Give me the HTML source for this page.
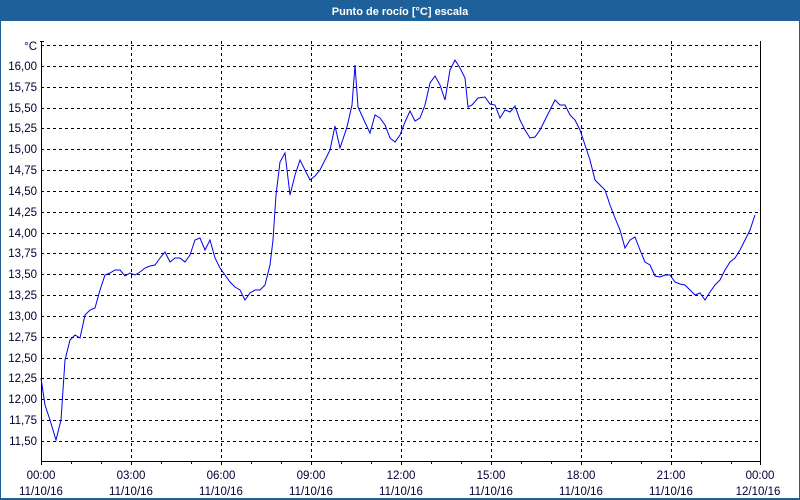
<!DOCTYPE html>
<html><head><meta charset="utf-8"><style>
body{margin:0;width:800px;height:500px;overflow:hidden;background:#fff;font-family:"Liberation Sans",sans-serif}
</style></head><body>
<svg width="800" height="500" xmlns="http://www.w3.org/2000/svg" style="position:absolute;left:0;top:0" font-family="'Liberation Sans',sans-serif">
<rect x="0" y="0" width="800" height="500" fill="#1e6099"/>
<rect x="1" y="21" width="798" height="477" fill="#fff"/>
<text x="400" y="15" fill="#fff" font-size="11" font-weight="bold" text-anchor="middle">Punto de rocío [°C] escala</text>
<g stroke="#000" stroke-dasharray="3,3" stroke-width="1">
<line x1="41" y1="45.5" x2="760" y2="45.5"/>
<line x1="41" y1="66.5" x2="760" y2="66.5"/><line x1="41" y1="87.5" x2="760" y2="87.5"/><line x1="41" y1="108.5" x2="760" y2="108.5"/><line x1="41" y1="128.5" x2="760" y2="128.5"/><line x1="41" y1="149.5" x2="760" y2="149.5"/><line x1="41" y1="170.5" x2="760" y2="170.5"/><line x1="41" y1="191.5" x2="760" y2="191.5"/><line x1="41" y1="212.5" x2="760" y2="212.5"/><line x1="41" y1="233.5" x2="760" y2="233.5"/><line x1="41" y1="253.5" x2="760" y2="253.5"/><line x1="41" y1="274.5" x2="760" y2="274.5"/><line x1="41" y1="295.5" x2="760" y2="295.5"/><line x1="41" y1="316.5" x2="760" y2="316.5"/><line x1="41" y1="337.5" x2="760" y2="337.5"/><line x1="41" y1="358.5" x2="760" y2="358.5"/><line x1="41" y1="378.5" x2="760" y2="378.5"/><line x1="41" y1="399.5" x2="760" y2="399.5"/><line x1="41" y1="420.5" x2="760" y2="420.5"/><line x1="41" y1="441.5" x2="760" y2="441.5"/>
<line x1="131.5" y1="41" x2="131.5" y2="461"/><line x1="221.5" y1="41" x2="221.5" y2="461"/><line x1="311.5" y1="41" x2="311.5" y2="461"/><line x1="401.5" y1="41" x2="401.5" y2="461"/><line x1="491.5" y1="41" x2="491.5" y2="461"/><line x1="581.5" y1="41" x2="581.5" y2="461"/><line x1="671.5" y1="41" x2="671.5" y2="461"/>
</g>
<g stroke="#000" stroke-width="1" fill="none">
<polyline points="41.5,41 41.5,461.5 760.5,461.5 760.5,41"/>
<line x1="40" y1="41.5" x2="44" y2="41.5"/>
</g>
<g stroke="#000" stroke-width="1">
<path d="M41.5 461v4M71.5 461v3M101.5 461v3M131.5 461v4M161.5 461v3M191.5 461v3M221.5 461v4M251.5 461v3M281.5 461v3M311.5 461v4M341.5 461v3M371.5 461v3M401.5 461v4M431.5 461v3M461.5 461v3M491.5 461v4M521.5 461v3M551.5 461v3M581.5 461v4M611.5 461v3M641.5 461v3M671.5 461v4M701.5 461v3M731.5 461v3M760.5 461v4"/>
</g>
<g fill="#000033" font-size="11.5" text-anchor="end">
<text x="37" y="50">°C</text>
<text x="37" y="70">16,00</text><text x="37" y="91">15,75</text><text x="37" y="112">15,50</text><text x="37" y="132">15,25</text><text x="37" y="153">15,00</text><text x="37" y="174">14,75</text><text x="37" y="195">14,50</text><text x="37" y="216">14,25</text><text x="37" y="237">14,00</text><text x="37" y="257">13,75</text><text x="37" y="278">13,50</text><text x="37" y="299">13,25</text><text x="37" y="320">13,00</text><text x="37" y="341">12,75</text><text x="37" y="362">12,50</text><text x="37" y="382">12,25</text><text x="37" y="403">12,00</text><text x="37" y="424">11,75</text><text x="37" y="445">11,50</text>
</g>
<g fill="#000033" font-size="11.5" text-anchor="middle">
<text x="41" y="479">00:00</text><text x="41" y="495">11/10/16</text>
<text x="131" y="479">03:00</text><text x="131" y="495">11/10/16</text>
<text x="221" y="479">06:00</text><text x="221" y="495">11/10/16</text>
<text x="311" y="479">09:00</text><text x="311" y="495">11/10/16</text>
<text x="401" y="479">12:00</text><text x="401" y="495">11/10/16</text>
<text x="491" y="479">15:00</text><text x="491" y="495">11/10/16</text>
<text x="581" y="479">18:00</text><text x="581" y="495">11/10/16</text>
<text x="671" y="479">21:00</text><text x="671" y="495">11/10/16</text>
<text x="760" y="479">00:00</text><text x="758" y="495">12/10/16</text>
</g>
<polyline fill="none" stroke="#0000ee" stroke-width="1" points="41,378 45,405 50,420 56,440 61,420 65,360 70,340 75,335 80,338 85,315 90,310 95,308 100,290 105,275 110,273 115,270 120,270 125,276 130,273 135,275 140,272 145,268 150,266 155,265 160,258 165,252 170,262 175,258 180,258 185,262 190,255 195,240 200,238 205,250 210,240 215,258 220,268 225,275 230,282 235,287 240,290 245,300 250,293 255,290 260,290 265,285 270,265 273,240 276,195 280,162 285,153 290,195 295,175 300,160 305,170 310,180 315,176 320,170 325,160 330,150 335,126 340,148 347,127 352,105 355,65 358,107 363,118 370,133 375,115 380,118 385,125 390,138 395,142 400,135 405,122 410,111 415,121 420,118 425,105 430,83 435,76 440,85 445,100 450,70 455,60 460,68 465,78 468,107 472,105 478,98 485,97 490,104 495,105 500,118 505,110 510,112 515,106 520,120 525,130 530,138 535,137 540,130 545,120 550,110 555,100 560,105 565,105 570,115 575,120 580,130 585,145 590,160 595,180 600,185 605,190 610,205 615,218 620,230 625,248 630,240 635,237 640,250 645,262 650,265 655,276 660,277 665,275 670,275 675,282 680,284 685,285 690,290 695,295 700,293 705,300 710,292 715,285 720,280 725,270 730,262 735,258 740,250 745,240 750,230 755,215"/>
</svg>
</body></html>
